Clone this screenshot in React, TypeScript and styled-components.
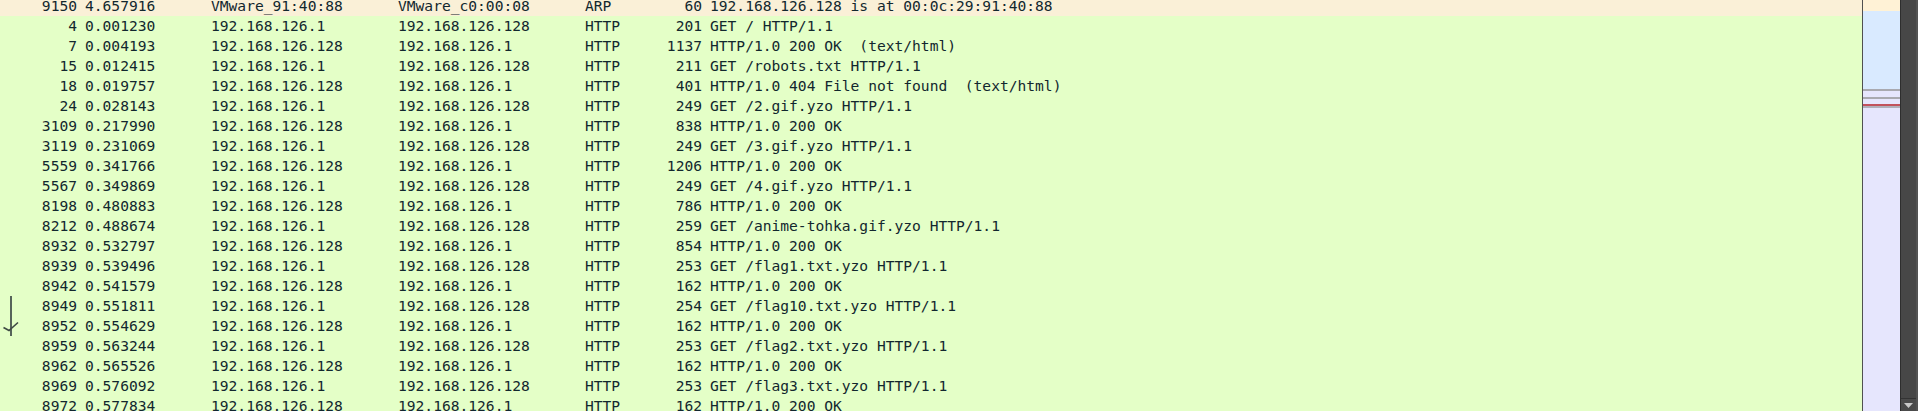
import React from "react";
import styled, { createGlobalStyle } from "styled-components";

const Global = createGlobalStyle`
  html, body { margin: 0; padding: 0; background: #474747; }
  body { overflow: hidden; }
  *, *::before, *::after { box-sizing: border-box; }
`;

type Proto = "ARP" | "HTTP";
type Related = "none" | "start" | "ack";

interface Packet {
  no: number;
  time: string;
  src: string;
  dst: string;
  proto: Proto;
  len: number;
  info: string;
  related?: Related;
}

const A = "192.168.126.1";
const B = "192.168.126.128";

const packets: Packet[] = [
  { no: 9150, time: "4.657916", src: "VMware_91:40:88", dst: "VMware_c0:00:08", proto: "ARP", len: 60, info: "192.168.126.128 is at 00:0c:29:91:40:88" },
  { no: 4, time: "0.001230", src: A, dst: B, proto: "HTTP", len: 201, info: "GET / HTTP/1.1" },
  { no: 7, time: "0.004193", src: B, dst: A, proto: "HTTP", len: 1137, info: "HTTP/1.0 200 OK  (text/html)" },
  { no: 15, time: "0.012415", src: A, dst: B, proto: "HTTP", len: 211, info: "GET /robots.txt HTTP/1.1" },
  { no: 18, time: "0.019757", src: B, dst: A, proto: "HTTP", len: 401, info: "HTTP/1.0 404 File not found  (text/html)" },
  { no: 24, time: "0.028143", src: A, dst: B, proto: "HTTP", len: 249, info: "GET /2.gif.yzo HTTP/1.1" },
  { no: 3109, time: "0.217990", src: B, dst: A, proto: "HTTP", len: 838, info: "HTTP/1.0 200 OK" },
  { no: 3119, time: "0.231069", src: A, dst: B, proto: "HTTP", len: 249, info: "GET /3.gif.yzo HTTP/1.1" },
  { no: 5559, time: "0.341766", src: B, dst: A, proto: "HTTP", len: 1206, info: "HTTP/1.0 200 OK" },
  { no: 5567, time: "0.349869", src: A, dst: B, proto: "HTTP", len: 249, info: "GET /4.gif.yzo HTTP/1.1" },
  { no: 8198, time: "0.480883", src: B, dst: A, proto: "HTTP", len: 786, info: "HTTP/1.0 200 OK" },
  { no: 8212, time: "0.488674", src: A, dst: B, proto: "HTTP", len: 259, info: "GET /anime-tohka.gif.yzo HTTP/1.1" },
  { no: 8932, time: "0.532797", src: B, dst: A, proto: "HTTP", len: 854, info: "HTTP/1.0 200 OK" },
  { no: 8939, time: "0.539496", src: A, dst: B, proto: "HTTP", len: 253, info: "GET /flag1.txt.yzo HTTP/1.1" },
  { no: 8942, time: "0.541579", src: B, dst: A, proto: "HTTP", len: 162, info: "HTTP/1.0 200 OK" },
  { no: 8949, time: "0.551811", src: A, dst: B, proto: "HTTP", len: 254, info: "GET /flag10.txt.yzo HTTP/1.1", related: "start" },
  { no: 8952, time: "0.554629", src: B, dst: A, proto: "HTTP", len: 162, info: "HTTP/1.0 200 OK", related: "ack" },
  { no: 8959, time: "0.563244", src: A, dst: B, proto: "HTTP", len: 253, info: "GET /flag2.txt.yzo HTTP/1.1" },
  { no: 8962, time: "0.565526", src: B, dst: A, proto: "HTTP", len: 162, info: "HTTP/1.0 200 OK" },
  { no: 8969, time: "0.576092", src: A, dst: B, proto: "HTTP", len: 253, info: "GET /flag3.txt.yzo HTTP/1.1" },
  { no: 8972, time: "0.577834", src: B, dst: A, proto: "HTTP", len: 162, info: "HTTP/1.0 200 OK" },
];

const rowBg: Record<Proto, string> = {
  ARP: "#faf0d7",
  HTTP: "#e4ffc7",
};

const Window = styled.div`
  display: flex;
  width: 1918px;
  height: 411px;
  overflow: hidden;
  font-family: "DejaVu Sans Mono", "Liberation Mono", monospace;
  font-size: 14.6px;
  color: #12272e;
`;

const ListPane = styled.div`
  flex: 0 0 1863px;
  overflow: hidden;
  background: #e4ffc7;
  border-right: 1px solid #505050;
`;

const Rows = styled.div`
  margin-top: -4px;
  display: flex;
  flex-direction: column;
`;

const Row = styled.div<{ $proto: Proto }>`
  display: grid;
  grid-template-columns: 81px 126px 187px 187px 69px 56px 1fr;
  height: 20px;
  line-height: 20px;
  background: ${(p) => rowBg[p.$proto]};
  white-space: pre;
`;

const Cell = styled.div<{ $align?: "left" | "right" }>`
  position: relative;
  padding: 0 4px;
  text-align: ${(p) => p.$align ?? "left"};
  overflow: hidden;
`;

const Marker = styled.svg`
  position: absolute;
  left: 0;
  top: 0;
  width: 24px;
  height: 20px;
  overflow: visible;
`;

const RelatedMark: React.FC<{ kind: Related }> = ({ kind }) => {
  if (kind === "none") return null;
  return (
    <Marker viewBox="0 0 24 20">
      <line x1="11" y1="0" x2="11" y2="20" stroke="#56645a" strokeWidth="2" />
      {kind === "ack" && (
        <polyline
          points="3.5,11.5 9,14.5 18,6.5"
          fill="none"
          stroke="#3f4a44"
          strokeWidth="1.6"
        />
      )}
    </Marker>
  );
};

const MiniMap = styled.div`
  flex: 0 0 38px;
  display: flex;
  flex-direction: column;
  background: #e6e6fd;
  border-right: 1px solid #2e2e2e;
`;

const MapBand = styled.div<{ $h: number; $c: string }>`
  flex: 0 0 ${(p) => p.$h}px;
  background: ${(p) => p.$c};
`;

const ScrollBar = styled.div`
  flex: 0 0 17px;
  display: flex;
  flex-direction: column;
  background: #474747;
  border-right: 2px solid #535353;
`;

const Track = styled.div`
  flex: 1;
`;

const ArrowButton = styled.div`
  flex: 0 0 13px;
  display: flex;
  align-items: center;
  justify-content: center;
  border-top: 1px solid #333333;
  background: #4a4a4a;
`;

const bands: { h: number; c: string }[] = [
  { h: 11, c: "#fff2d6" },
  { h: 78, c: "#d9eaff" },
  { h: 2, c: "#a9a9b0" },
  { h: 6, c: "#e6e6fd" },
  { h: 2, c: "#a9a9b0" },
  { h: 5, c: "#e6e6fd" },
  { h: 2, c: "#c2525c" },
  { h: 2, c: "#b0b0ba" },
];

export default function App() {
  return (
    <>
      <Global />
      <Window>
        <ListPane>
          <Rows>
            {packets.map((p) => (
              <Row key={p.no} $proto={p.proto}>
                <Cell $align="right">
                  <RelatedMark kind={p.related ?? "none"} />
                  {p.no}
                </Cell>
                <Cell>{p.time}</Cell>
                <Cell>{p.src}</Cell>
                <Cell>{p.dst}</Cell>
                <Cell>{p.proto}</Cell>
                <Cell $align="right">{p.len}</Cell>
                <Cell>{p.info}</Cell>
              </Row>
            ))}
          </Rows>
        </ListPane>
        <MiniMap>
          {bands.map((b, i) => (
            <MapBand key={i} $h={b.h} $c={b.c} />
          ))}
        </MiniMap>
        <ScrollBar>
          <Track />
          <ArrowButton>
            <svg width="9" height="5" viewBox="0 0 9 5">
              <polygon points="0,0 9,0 4.5,5" fill="#c9c9c9" />
            </svg>
          </ArrowButton>
        </ScrollBar>
      </Window>
    </>
  );
}
